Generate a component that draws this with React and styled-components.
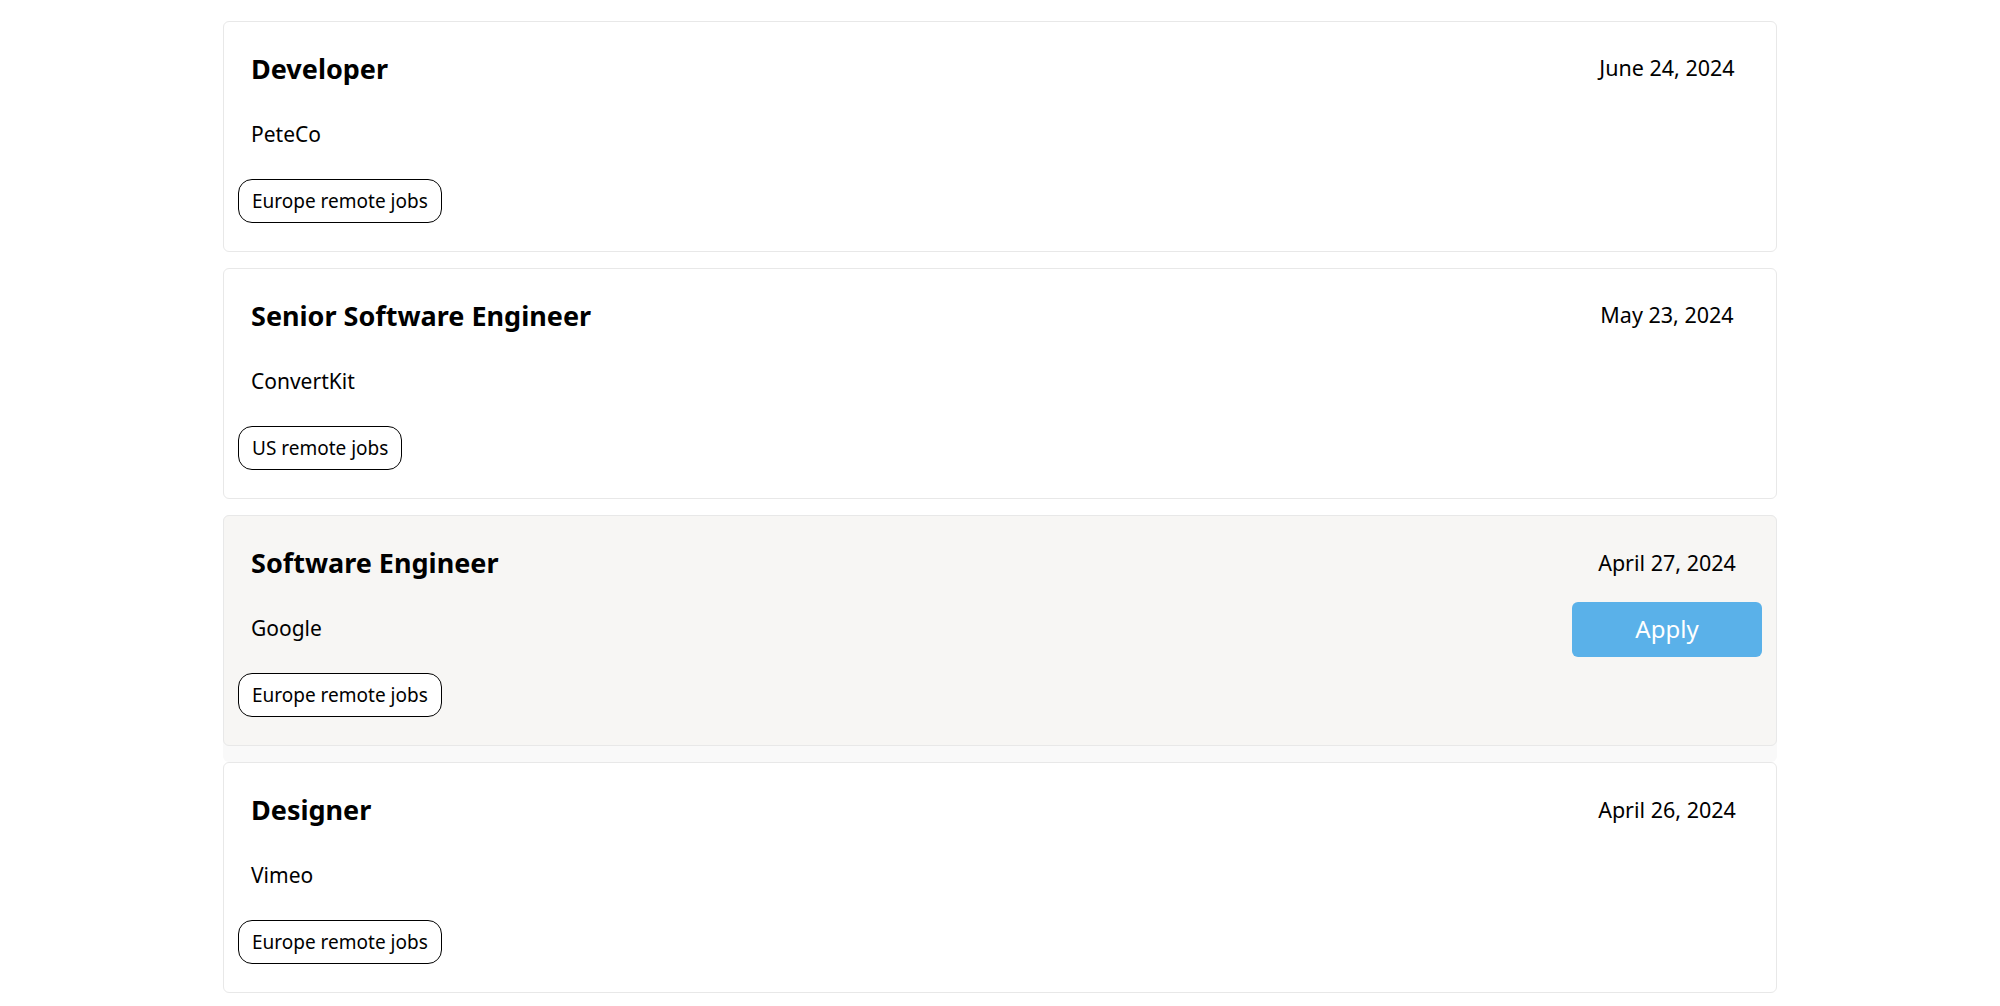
import React from "react";
import styled, { createGlobalStyle, css } from "styled-components";

const GlobalStyle = createGlobalStyle`
  html, body { margin: 0; padding: 0; background: #ffffff; }
  body { font-family: "Noto Sans", "Open Sans", sans-serif; color: #000; }
  * { box-sizing: border-box; }
`;

const List = styled.ul`
  list-style: none;
  margin: 0 auto;
  padding: 20.5px 0 0;
  width: 1554px;
`;

const Item = styled.li`
  padding-bottom: 16.3px;
  border-radius: 6px;
  ${(p) =>
    p.$active &&
    css`
      background: #f9f9f9;
    `}
`;

const Card = styled.article`
  display: flex;
  justify-content: space-between;
  align-items: flex-start;
  height: 231px;
  padding: 29px 14px 0;
  border: 1px solid #e8e8e8;
  border-radius: 6px;
  background: ${(p) => (p.$active ? "#f7f6f4" : "#ffffff")};
`;

const Main = styled.div`
  display: flex;
  flex-direction: column;
  align-items: flex-start;
`;

const Title = styled.h2`
  margin: 0 0 32px 13px;
  font-size: 27px;
  line-height: 36px;
  font-weight: 700;
  color: #000;
`;

const Company = styled.div`
  margin: 0 0 30px 13px;
  font-size: 21px;
  line-height: 30px;
  color: #000;
`;

const Tag = styled.span`
  display: inline-flex;
  align-items: center;
  height: 44px;
  padding: 0 13px;
  border: 1.5px solid #000;
  border-radius: 14px;
  font-size: 19px;
  line-height: 26px;
  color: #000;
  background: #fff;
`;

const Side = styled.div`
  width: 190px;
  display: flex;
  flex-direction: column;
  align-items: center;
`;

const DateText = styled.div`
  margin-top: 2.5px;
  font-size: 21.5px;
  line-height: 30px;
  color: #000;
`;

const ApplyButton = styled.button`
  margin-top: 24px;
  width: 190px;
  height: 55px;
  border: none;
  border-radius: 6px;
  background: #5ab1e9;
  color: #fff;
  font-family: "Noto Sans", "Open Sans", sans-serif;
  font-size: 24px;
  line-height: 32px;
  cursor: pointer;
`;

const jobs = [
  { title: "Developer", company: "PeteCo", tag: "Europe remote jobs", date: "June 24, 2024" },
  { title: "Senior Software Engineer", company: "ConvertKit", tag: "US remote jobs", date: "May 23, 2024" },
  { title: "Software Engineer", company: "Google", tag: "Europe remote jobs", date: "April 27, 2024", active: true },
  { title: "Designer", company: "Vimeo", tag: "Europe remote jobs", date: "April 26, 2024" },
];

export default function App() {
  return (
    <>
      <GlobalStyle />
      <List>
        {jobs.map((j) => (
          <Item key={j.title} $active={j.active}>
            <Card $active={j.active}>
              <Main>
                <Title>{j.title}</Title>
                <Company>{j.company}</Company>
                <Tag>{j.tag}</Tag>
              </Main>
              <Side>
                <DateText>{j.date}</DateText>
                {j.active && <ApplyButton>Apply</ApplyButton>}
              </Side>
            </Card>
          </Item>
        ))}
      </List>
    </>
  );
}
